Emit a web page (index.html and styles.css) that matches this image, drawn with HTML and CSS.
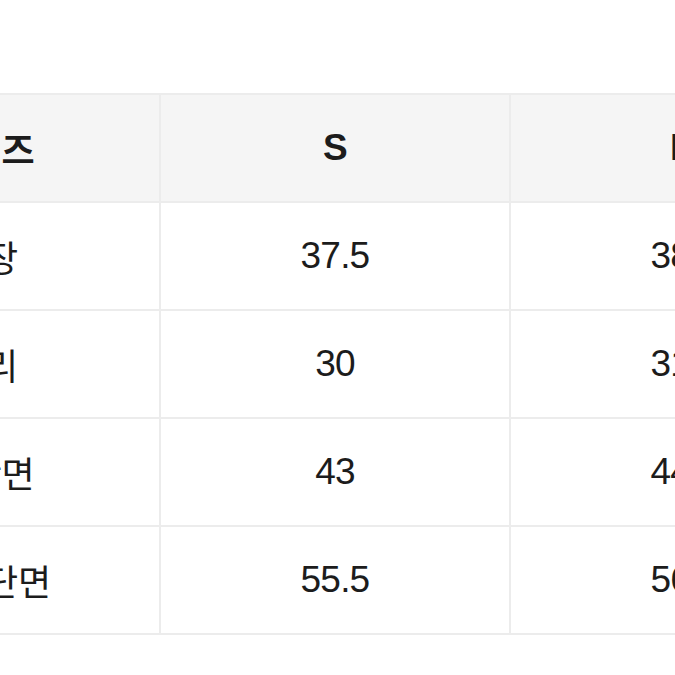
FILE: index.html
```html
<!DOCTYPE html>
<html lang="ko">
<head>
<meta charset="utf-8">
<link rel="stylesheet" href="styles.css">
</head>
<body>
<div class="viewport">
  <table class="size-table">
    <thead>
      <tr>
        <th class="label">사이즈</th>
        <th>S</th>
        <th>M</th>
      </tr>
    </thead>
    <tbody>
      <tr><td class="label">총장</td><td>37.5</td><td>38.5</td></tr>
      <tr><td class="label">허리</td><td>30</td><td>31.5</td></tr>
      <tr><td class="label">힙단면</td><td>43</td><td>44.5</td></tr>
      <tr><td class="label">밑단단면</td><td>55.5</td><td>56.5</td></tr>
    </tbody>
  </table>
</div>
</body>
</html>
```

FILE: styles.css
```css
html, body {
  margin: 0;
  padding: 0;
  background: #ffffff;
}

.viewport {
  width: 675px;
  height: 675px;
  overflow: hidden;
  padding-top: 93px;
  box-sizing: border-box;
}

.size-table {
  margin-left: -191px;
  border-collapse: collapse;
  table-layout: fixed;
  width: 1052px;
  font-family: "Liberation Sans", "Noto Sans CJK KR", sans-serif;
  color: #1c1c1c;
}

.size-table th,
.size-table td {
  width: 348px;
  height: 106px;
  padding: 0;
  border: 2px solid #ececec;
  text-align: center;
  vertical-align: middle;
  font-size: 37px;
  letter-spacing: -0.8px;
  box-sizing: content-box;
}

.size-table th {
  background: #f5f5f5;
  font-weight: 700;
}

.size-table td {
  font-weight: 400;
}

.size-table .label {
  font-family: "Noto Sans CJK KR", sans-serif;
  font-size: 36px;
  letter-spacing: 0;
}

.size-table th.label {
  font-weight: 700;
}
```
